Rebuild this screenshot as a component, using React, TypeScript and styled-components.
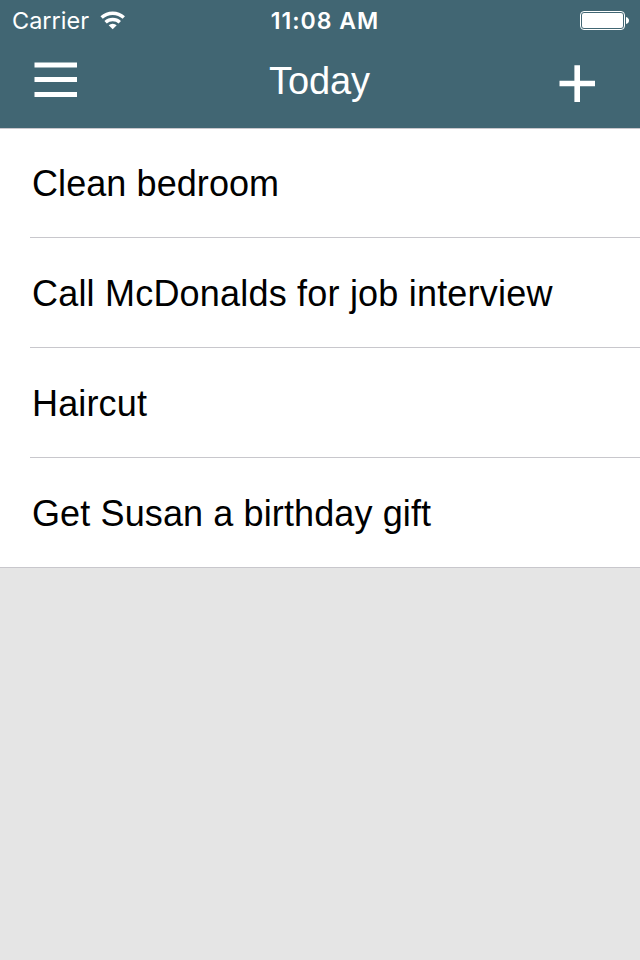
import React from "react";
import styled, { createGlobalStyle } from "styled-components";

const GlobalStyle = createGlobalStyle`
  * { box-sizing: border-box; }
  body { margin: 0; background: #e5e5e5; }
`;

const Screen = styled.div`
  width: 640px;
  height: 960px;
  overflow: hidden;
  background: #e5e5e5;
  font-family: "Liberation Sans", Arial, sans-serif;
`;

const Header = styled.header`
  height: 128px;
  background: #416673;
  color: #fff;
`;

const StatusBar = styled.div`
  height: 40px;
  display: grid;
  grid-template-columns: 1fr auto 1fr;
  grid-template-rows: 40px;
  align-items: center;
  padding: 0 11px 0 12px;
  font-family: Inter, sans-serif;
  font-size: 23.5px;
  line-height: 38px;
`;

const Carrier = styled.div`
  display: flex;
  align-items: center;
  gap: 11px;
  padding-top: 1px;
`;

const Clock = styled.div`
  padding: 2px 0 0 9px;
  font-size: 23px;
  font-weight: 600;
  letter-spacing: 1px;
`;

const Battery = styled.svg`
  justify-self: end;
`;

const NavBar = styled.nav`
  height: 88px;
  display: grid;
  grid-template-columns: 1fr auto 1fr;
  padding: 0 34px;
`;

const Title = styled.h1`
  margin: 0 1px 0 0;
  font-size: 38px;
  font-weight: 400;
  line-height: 82px;
  letter-spacing: -0.1px;
`;

const IconButton = styled.button<{ $end?: boolean }>`
  display: flex;
  align-items: flex-start;
  justify-self: ${(p) => (p.$end ? "end" : "start")};
  padding: ${(p) => (p.$end ? "25px 10px 0 0" : "22px 0 0")};
  border: 0;
  background: none;
  color: inherit;
`;

const List = styled.ul`
  margin: 0;
  padding: 0;
  list-style: none;
  background: #fff;
  border-bottom: 1px solid #c8c7cc;
  box-shadow: inset 0 1px #c8c7cc;
`;

const Row = styled.li`
  height: 110px;
  margin-left: 30px;
  padding-left: 2px;
  border-bottom: 1px solid #c8c7cc;
  font-size: 36px;
  line-height: 112px;
  color: #000;
  &:last-child {
    height: 109px;
    border-bottom: 0;
  }
`;

const TaskText = styled.span<{ $spacing: number }>`
  letter-spacing: ${(p) => p.$spacing}px;
`;

const tasks = [
  { text: "Clean bedroom", spacing: 0.08 },
  { text: "Call McDonalds for job interview", spacing: 0.2 },
  { text: "Haircut", spacing: 0.15 },
  { text: "Get Susan a birthday gift", spacing: 0.12 },
];

export default function App() {
  return (
    <Screen>
      <GlobalStyle />
      <Header>
        <StatusBar>
          <Carrier>
            <span>Carrier</span>
            <svg width="26" height="19" viewBox="0 0 26 19" fill="none" stroke="#fff" strokeWidth="3.4">
              <path d="M1.600 6.600a16.3 16.3 0 0 1 22.200 0" />
              <path d="M5.600 11.300a10.3 10.3 0 0 1 14.200 0" />
              <path d="M12.700 18.300l-4-4a5.700 5.700 0 0 1 8 0z" fill="#fff" stroke="none" />
            </svg>
          </Carrier>
          <Clock>11:08 AM</Clock>
          <Battery width="49" height="19" viewBox="0 0 49 19">
            <rect x="0.5" y="0.5" width="44" height="18" rx="3.5" fill="none" stroke="#fff" />
            <rect x="2" y="2" width="41" height="15" rx="2" fill="#fff" />
            <path d="M46 6q3 1 3 3.500t-3 3.500z" fill="#fff" />
          </Battery>
        </StatusBar>
        <NavBar>
          <IconButton aria-label="Menu">
            <svg width="43" height="36" viewBox="0 0 43 36" stroke="#fff" strokeWidth="5">
              <path d="M0.500 3h42.500M0.500 17.600h42.500M0.500 32.400h42.500" />
            </svg>
          </IconButton>
          <Title>Today</Title>
          <IconButton $end aria-label="Add task">
            <svg width="37" height="38" viewBox="0 0 37 38" stroke="#fff" strokeWidth="5.600">
              <path d="M0.500 18.500h35.500M18.200 0.300v36.700" />
            </svg>
          </IconButton>
        </NavBar>
      </Header>
      <List>
        {tasks.map((t) => (
          <Row key={t.text}>
            <TaskText $spacing={t.spacing}>{t.text}</TaskText>
          </Row>
        ))}
      </List>
    </Screen>
  );
}
